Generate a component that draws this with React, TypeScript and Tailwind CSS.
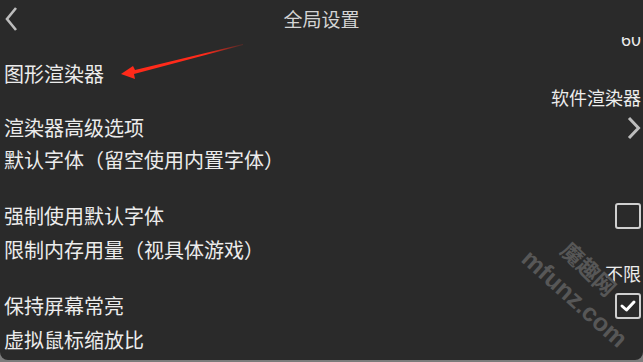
import React from 'react';

const font = { fontFamily: '"Noto Sans CJK SC", "Noto Sans", sans-serif' };

function Checkbox({ checked }: { checked?: boolean }) {
  return (
    <div className="w-[26px] h-[26px] rounded-[3px] border-2 border-[#cfcfcf] flex items-center justify-center">
      {checked && (
        <svg width="18" height="14" viewBox="0 0 18 14">
          <polyline points="3,7 7.5,11 15,3" fill="none" stroke="#ffffff" strokeWidth="3" strokeLinecap="round" strokeLinejoin="round" />
        </svg>
      )}
    </div>
  );
}

function Chevron() {
  return (
    <svg width="15" height="24" viewBox="0 0 15 24">
      <polyline points="3,2 12.5,12 3,22" fill="none" stroke="#bdbdbd" strokeWidth="3" />
    </svg>
  );
}

interface ItemProps {
  label: string;
  value?: string;
  emptyValue?: boolean;
  right?: React.ReactNode;
  tall?: boolean;
}

function Item({ label, value, emptyValue, right, tall }: ItemProps) {
  return (
    <div className="py-[4px]">
      <div className={`flex items-center justify-between ${tall ? 'h-[28px]' : 'h-[24px]'}`}>
        <span className="text-[20px] leading-[24px] text-[#ececec] whitespace-nowrap">{label}</span>
        {right}
      </div>
      {(value || emptyValue) && (
        <div className="h-[22px] text-right text-[18px] leading-[22px] text-[#ececec]">{value}</div>
      )}
    </div>
  );
}

export default function App() {
  return (
    <div className="w-[643px] h-[362px] bg-[#7c7c7c] overflow-hidden" style={font}>
      <div className="relative w-full h-[360px] bg-[#2a2a2a] rounded-b-[8px] overflow-hidden flex flex-col">
        {/* Header */}
        <div className="h-[37px] shrink-0 flex items-center relative z-10 bg-[#2a2a2a]">
          <div className="absolute left-[4px] top-[6px]">
            <svg width="16" height="26" viewBox="0 0 16 26">
              <polyline points="12,2 3,13 12,24" fill="none" stroke="#bdbdbd" strokeWidth="2.6" />
            </svg>
          </div>
          <div className="w-full text-center text-[19px] leading-[24px] text-[#d4d4d4] pt-[1px]">全局设置</div>
        </div>

        {/* List */}
        <div className="flex-1 overflow-hidden pl-[4px] pr-[2px]">
          <div className="-mt-[10px] h-[22px] text-right text-[18px] leading-[22px] text-[#ececec]">60</div>
          <div className="mt-[9px]">
            <Item label="图形渲染器" value="软件渲染器" />
            <Item label="渲染器高级选项" right={<Chevron />} />
            <Item label="默认字体（留空使用内置字体）" emptyValue />
            <Item label="强制使用默认字体" tall right={<Checkbox />} />
            <Item label="限制内存用量（视具体游戏）" value="不限" />
            <Item label="保持屏幕常亮" tall right={<Checkbox checked />} />
            <Item label="虚拟鼠标缩放比" />
          </div>
        </div>

        {/* Red annotation arrow */}
        <svg className="absolute left-0 top-0 pointer-events-none" width="643" height="362">
          <defs>
            <linearGradient id="ar" x1="240" y1="44" x2="122" y2="74" gradientUnits="userSpaceOnUse">
              <stop offset="0" stopColor="#ff2a1a" stopOpacity="0.2" />
              <stop offset="0.3" stopColor="#ff2a1a" />
              <stop offset="1" stopColor="#ff2a1a" />
            </linearGradient>
          </defs>
          <polygon points="243,44 135,70 133,66 121,74 135,79 134,74 243,45" fill="url(#ar)" />
        </svg>

        {/* Watermark */}
        <div className="absolute left-[526px] top-[240px] rotate-[42deg] origin-left text-[25px] leading-[28px] font-bold text-[#575757] pointer-events-none" style={{ fontFamily: '"Liberation Sans", Arial, sans-serif' }}>
          mfunz.com
        </div>
        <div className="absolute left-[566px] top-[232px] rotate-[44deg] origin-left text-[22px] leading-[26px] font-bold text-[#575757] pointer-events-none">
          魔趣网
        </div>
      </div>
    </div>
  );
}
